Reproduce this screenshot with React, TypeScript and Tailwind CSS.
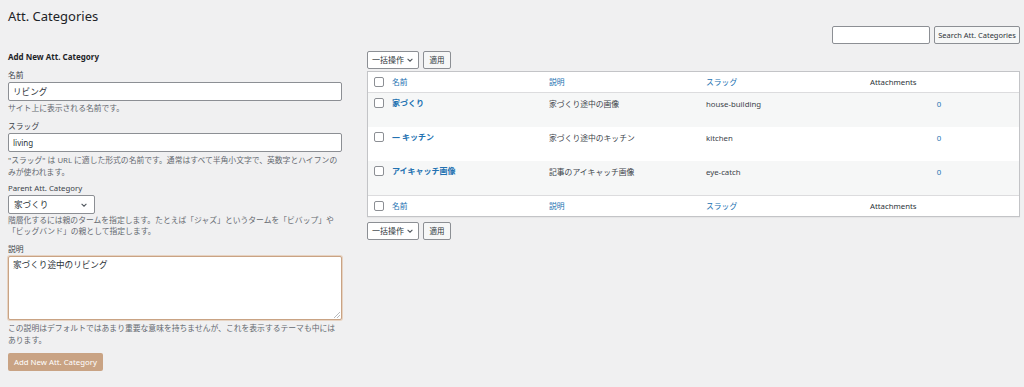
import React from 'react';

const font = { fontFamily: '"Noto Sans", "Noto Sans CJK JP", sans-serif' };

const Checkbox = () => (
  <span className="inline-block w-[10px] h-[10px] rounded-[2px] border border-[#8c8f94] bg-white" />
);

const Chevron = () => (
  <svg width="8" height="8" viewBox="0 0 10 10" className="text-[#50575e]">
    <path d="M2 3.5 L5 6.5 L8 3.5" fill="none" stroke="currentColor" strokeWidth="1.3" />
  </svg>
);

const BulkActions = () => (
  <div className="flex items-center gap-[4px]">
    <div className="flex items-center justify-between w-[52px] h-[18px] px-[4px] bg-white border border-[#8c8f94] rounded-[2px] text-[8px] text-[#2c3338]">
      <span>一括操作</span>
      <Chevron />
    </div>
    <div className="flex items-center justify-center w-[28px] h-[18px] bg-[#f6f7f7] border border-[#8c8f94] rounded-[2px] text-[7.5px] text-[#2c3338]">
      適用
    </div>
  </div>
);

const rows = [
  { name: '家づくり', desc: '家づくり途中の画像', slug: 'house-building', count: '0', bg: 'bg-[#f6f7f7]' },
  { name: '— キッチン', desc: '家づくり途中のキッチン', slug: 'kitchen', count: '0', bg: 'bg-white' },
  { name: 'アイキャッチ画像', desc: '記事のアイキャッチ画像', slug: 'eye-catch', count: '0', bg: 'bg-[#f6f7f7]' },
];

const HeaderRow = ({ top }: { top?: boolean }) => (
  <div className={`flex items-center h-[21px] bg-white ${top ? 'border-b' : 'border-t'} border-[#dcdcde]`}>
    <div className="w-[19px] pl-[6px] flex items-center"><Checkbox /></div>
    <div className="w-[157px] pl-[5px] text-[#2271b1]">名前</div>
    <div className="w-[157px] pl-[5px] text-[#2271b1]">説明</div>
    <div className="w-[164px] pl-[5px] text-[#2271b1]">スラッグ</div>
    <div className="flex-1 pl-[5px] text-[#2c3338]">Attachments</div>
  </div>
);

export default function App() {
  return (
    <div style={font} className="min-h-[387px] bg-[#f0f0f1] text-[7.8px] leading-[12px] text-[#3c434a] pl-[8px] pr-[4px]">
      <h1 className="pt-[7px] h-[26px] text-[13px] leading-[19px] text-[#1d2327]">Att. Categories</h1>

      <div className="flex justify-end gap-[4px] h-[18px]">
        <div className="w-[98px] h-[18px] bg-white border border-[#8c8f94] rounded-[2px]" />
        <div className="flex items-center justify-center w-[86px] h-[18px] bg-[#f6f7f7] border border-[#8c8f94] rounded-[2px] text-[7.5px] text-[#2c3338]">
          Search Att. Categories
        </div>
      </div>

      <div className="flex">
        {/* left column */}
        <div className="w-[334px] pt-[7px]">
          <h2 className="font-bold text-[#1d2327] text-[8px] leading-[12px]">Add New Att. Category</h2>

          <div className="mt-[6px]">名前</div>
          <div className="mt-[1px] h-[19px] bg-white border border-[#8c8f94] rounded-[2px] px-[4px] flex items-center text-[8.6px] text-[#2c3338]">リビング</div>
          <p className="mt-[1px] text-[#646970]">サイト上に表示される名前です。</p>

          <div className="mt-[6px]">スラッグ</div>
          <div className="mt-[1px] h-[19px] bg-white border border-[#8c8f94] rounded-[2px] px-[4px] flex items-center text-[8px] text-[#2c3338]">living</div>
          <p className="mt-[2px] text-[#646970]">"スラッグ" は URL に適した形式の名前です。通常はすべて半角小文字で、英数字とハイフンのみが使われます。</p>

          <div className="mt-[4px]">Parent Att. Category</div>
          <div className="mt-[1px] w-[87px] h-[19px] bg-white border border-[#8c8f94] rounded-[2px] pl-[5px] pr-[6px] flex items-center justify-between text-[8.6px] text-[#2c3338]">
            <span>家づくり</span>
            <Chevron />
          </div>
          <p className="mt-[1px] leading-[11px] text-[#646970]">階層化するには親のタームを指定します。たとえば「ジャズ」というタームを「ビバップ」や「ビッグバンド」の親として指定します。</p>

          <div className="mt-[6px]">説明</div>
          <div className="mt-[1px] relative h-[64px] bg-white border border-[#c9a384] rounded-[2px] px-[4px] pt-[2px] text-[8.6px] text-[#2c3338] shadow-[0_0_0_1px_#e7d3c2]">
            家づくり途中のリビング
            <svg width="6" height="6" viewBox="0 0 6 6" className="absolute right-[1px] bottom-[1px]">
              <path d="M6 0 L0 6 M6 3 L3 6" stroke="#a7aaad" strokeWidth="0.8" />
            </svg>
          </div>
          <p className="mt-[2px] text-[#646970]">この説明はデフォルトではあまり重要な意味を持ちませんが、これを表示するテーマも中にはあります。</p>

          <div className="mt-[7px] inline-flex items-center h-[18px] px-[6px] bg-[#c9a384] rounded-[2px] text-white text-[7.8px]">
            Add New Att. Category
          </div>
        </div>

        {/* right column */}
        <div className="ml-[25px] flex-1 pt-[7px]">
          <BulkActions />
          <div className="mt-[2px] border border-[#c3c4c7] bg-white shadow-[0_1px_1px_rgba(0,0,0,0.04)]">
            <HeaderRow top />
            {rows.map((r) => (
              <div key={r.slug} className={`flex items-start h-[34px] pt-[4px] ${r.bg}`}>
                <div className="w-[19px] pl-[6px] pt-[1px] flex items-center"><Checkbox /></div>
                <div className="w-[157px] pl-[5px] font-bold text-[#2271b1] text-[8px]">{r.name}</div>
                <div className="w-[157px] pl-[5px] pt-[1px]">{r.desc}</div>
                <div className="w-[164px] pl-[5px] pt-[1px]">{r.slug}</div>
                <div className="flex-1 pt-[1px] text-center text-[#2271b1] pr-[6px]">{r.count}</div>
              </div>
            ))}
            <HeaderRow />
          </div>
          <div className="mt-[5px]">
            <BulkActions />
          </div>
        </div>
      </div>
    </div>
  );
}
